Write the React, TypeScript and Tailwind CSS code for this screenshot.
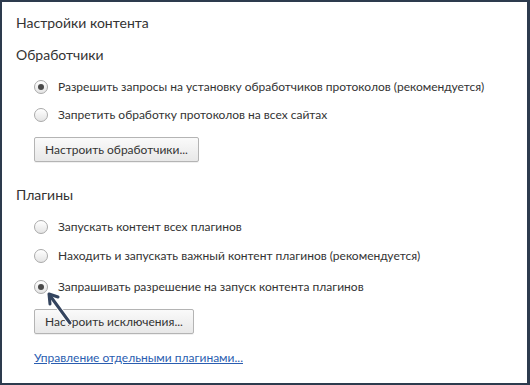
const font = { fontFamily: 'Lato, "Noto Sans", sans-serif' };

function Radio({ checked }: { checked?: boolean }) {
  return (
    <span className="flex h-[14px] w-[14px] shrink-0 items-center justify-center rounded-full border border-[#a9a9a9] bg-gradient-to-b from-white to-[#e4e4e4] shadow-[inset_0_1px_0_#fff]">
      {checked && <span className="h-[6px] w-[6px] rounded-full bg-[#4a4a4a]" />}
    </span>
  );
}

function Option({ label, checked, className }: { label: string; checked?: boolean; className: string }) {
  return (
    <div className={`flex h-[20px] items-center gap-[10px] pl-[18px] ${className}`}>
      <Radio checked={checked} />
      <span className="whitespace-nowrap leading-[20px]">{label}</span>
    </div>
  );
}

function Button({ label, className }: { label: string; className: string }) {
  return (
    <div className={`ml-[18px] ${className}`}>
      <button className="h-[25px] rounded-[2px] border border-[#b4b4b4] bg-gradient-to-b from-[#fafafa] to-[#e8e8e8] px-[10px] text-[12px] text-[#333] shadow-[0_1px_0_rgba(0,0,0,0.06)]">
        {label}
      </button>
    </div>
  );
}

export default function App() {
  return (
    <div
      className="relative h-[385px] w-[530px] border-b-2 border-l-2 border-r-[3px] border-t-2 border-[#2d3b4e] bg-white text-[12px] text-[#333]"
      style={font}
    >
      <div className="flex flex-col pl-[14px] pt-[11px]">
        <div className="h-[20px] text-[14px] leading-[20px]">Настройки контента</div>
        <div className="mt-[12px] h-[20px] text-[14px] leading-[20px]">Обработчики</div>
        <Option className="mt-[12px]" checked label="Разрешить запросы на установку обработчиков протоколов (рекомендуется)" />
        <Option className="mt-[8px]" label="Запретить обработку протоколов на всех сайтах" />
        <Button className="mt-[12px]" label="Настроить обработчики..." />
        <div className="mt-[23px] h-[20px] text-[14px] leading-[20px]">Плагины</div>
        <Option className="mt-[12px]" label="Запускать контент всех плагинов" />
        <Option className="mt-[9px]" label="Находить и запускать важный контент плагинов (рекомендуется)" />
        <Option className="mt-[11px]" checked label="Запрашивать разрешение на запуск контента плагинов" />
        <Button className="mt-[12px]" label="Настроить исключения..." />
        <div className="ml-[18px] mt-[14px] h-[20px] leading-[20px]">
          <a className="text-[#2a5db0] underline" href="#">
            Управление отдельными плагинами...
          </a>
        </div>
      </div>
      <svg className="pointer-events-none absolute left-0 top-0" width="530" height="385">
        <g transform="translate(-2,-2)">
          <path d="M70 323 L51 297" stroke="#fff" strokeWidth="5" strokeLinecap="round" />
          <path d="M58 297 L49 294 L50 304" fill="none" stroke="#fff" strokeWidth="5" strokeLinecap="round" strokeLinejoin="round" />
          <path d="M70 323 L51 297" stroke="#34445e" strokeWidth="3" strokeLinecap="round" />
          <path d="M58 297 L49 294 L50 304" fill="none" stroke="#34445e" strokeWidth="3" strokeLinecap="round" strokeLinejoin="round" />
        </g>
      </svg>
    </div>
  );
}
